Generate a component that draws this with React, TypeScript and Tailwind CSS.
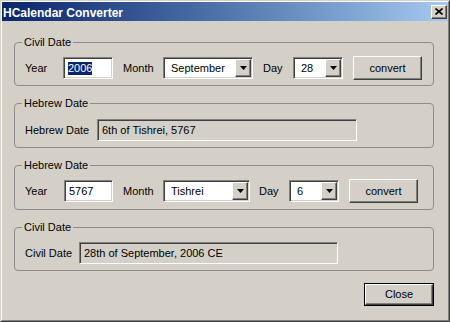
import type { ReactNode } from 'react';

const sunken =
  'border border-t-[#808080] border-l-[#808080] border-r-white border-b-white shadow-[inset_1px_1px_0_#404040,inset_-1px_-1px_0_#d4d0c8]';
const raised =
  'border border-t-white border-l-white border-r-[#404040] border-b-[#404040] shadow-[inset_-1px_-1px_0_#808080]';

const GroupBox = ({ title, h, pt, children }: { title: string; h: string; pt: string; children: ReactNode }) => (
  <div className={`relative w-[420px] ${h} ${pt} rounded-[4px] border border-[#8c8c8c] pl-[10px]`}>
    <span className="absolute -top-[7px] left-[7px] bg-[#d4d0c8] px-[2px] leading-[13px]">{title}</span>
    {children}
  </div>
);

const Label = ({ w, ml = '', children }: { w: string; ml?: string; children: ReactNode }) => (
  <span className={`${w} ${ml} shrink-0`}>{children}</span>
);

const TextBox = ({ w, value, selected = false }: { w: string; value: string; selected?: boolean }) => (
  <div className={`${w} h-[22px] ${sunken} bg-white flex items-center pl-[4px] shrink-0`}>
    {selected ? (
      <span className="bg-[#0a246a] text-white leading-[13px]">{value}</span>
    ) : (
      <span className="leading-[13px]">{value}</span>
    )}
  </div>
);

const ReadOnly = ({ w, value }: { w: string; value: string }) => (
  <div className={`${w} h-[22px] ${sunken} bg-[#d4d0c8] flex items-center pl-[4px] shrink-0`}>
    <span className="leading-[13px]">{value}</span>
  </div>
);

const Combo = ({ w, value }: { w: string; value: string }) => (
  <div className={`${w} h-[22px] ${sunken} bg-white flex items-stretch p-[1px] shrink-0`}>
    <span className="flex-1 flex items-center pl-[6px] leading-[13px]">{value}</span>
    <div className={`w-[16px] ${raised} bg-[#d4d0c8] flex items-center justify-center`}>
      <svg width="7" height="4" viewBox="0 0 7 4">
        <polygon points="0,0 7,0 3.5,4" fill="#000" />
      </svg>
    </div>
  </div>
);

const Button = ({ w, h, ml = '', children }: { w: string; h: string; ml?: string; children: ReactNode }) => (
  <button className={`${w} ${h} ${ml} ${raised} bg-[#d4d0c8] flex items-center justify-center shrink-0`}>
    {children}
  </button>
);

export default function App() {
  return (
    <div
      className="w-[450px] h-[322px] bg-[#d4d0c8] border border-t-[#d4d0c8] border-l-[#d4d0c8] border-r-[#404040] border-b-[#404040] text-[11px] text-black"
      style={{ fontFamily: '"Liberation Sans", Arial, sans-serif' }}
    >
      <div className="h-full border border-t-white border-l-white border-r-[#808080] border-b-[#808080] flex flex-col">
        {/* Title bar */}
        <div className="h-[19px] bg-gradient-to-r from-[#0a246a] to-[#a6caf0] flex items-center justify-between pl-[1px] pr-[1px]">
          <span className="text-white font-bold text-[12px] leading-[14px] mt-[2px]">HCalendar Converter</span>
          <div className={`w-[16px] h-[14px] ${raised} bg-[#d4d0c8] flex items-center justify-center`}>
            <svg width="8" height="7" viewBox="0 0 8 7">
              <path d="M0.5 0.5 L7.5 6.5 M7.5 0.5 L0.5 6.5" stroke="#000" strokeWidth="1.6" />
            </svg>
          </div>
        </div>

        <div className="pl-[12px] pt-[21px] flex flex-col">
          <GroupBox title="Civil Date" h="h-[44px]" pt="pt-[13px]">
            <div className="h-[24px] flex items-center">
              <Label w="w-[38px]">Year</Label>
              <TextBox w="w-[50px]" value="2006" selected />
              <Label w="w-[40px]" ml="ml-[10px]">Month</Label>
              <Combo w="w-[90px]" value="September" />
              <Label w="w-[30px]" ml="ml-[10px]">Day</Label>
              <Combo w="w-[50px]" value="28" />
              <Button w="w-[69px]" h="h-[24px]" ml="ml-[10px]">convert</Button>
            </div>
          </GroupBox>

          <div className="mt-[17px]">
            <GroupBox title="Hebrew Date" h="h-[45px]" pt="pt-[14px]">
              <div className="h-[24px] flex items-center">
                <Label w="w-[72px]">Hebrew Date</Label>
                <ReadOnly w="w-[260px]" value="6th of Tishrei, 5767" />
              </div>
            </GroupBox>
          </div>

          <div className="mt-[17px]">
            <GroupBox title="Hebrew Date" h="h-[45px]" pt="pt-[13px]">
              <div className="h-[24px] flex items-center">
                <Label w="w-[39px]">Year</Label>
                <TextBox w="w-[49px]" value="5767" />
                <Label w="w-[40px]" ml="ml-[10px]">Month</Label>
                <Combo w="w-[87px]" value="Tishrei" />
                <Label w="w-[30px]" ml="ml-[9px]">Day</Label>
                <Combo w="w-[50px]" value="6" />
                <Button w="w-[69px]" h="h-[24px]" ml="ml-[10px]">convert</Button>
              </div>
            </GroupBox>
          </div>

          <div className="mt-[17px]">
            <GroupBox title="Civil Date" h="h-[44px]" pt="pt-[13px]">
              <div className="h-[24px] flex items-center">
                <Label w="w-[54px]">Civil Date</Label>
                <ReadOnly w="w-[259px]" value="28th of September, 2006 CE" />
              </div>
            </GroupBox>
          </div>

          <div className="w-[420px] flex justify-end mt-[12px]">
            <div className="border border-black">
              <Button w="w-[68px]" h="h-[21px]">Close</Button>
            </div>
          </div>
        </div>
      </div>
    </div>
  );
}
